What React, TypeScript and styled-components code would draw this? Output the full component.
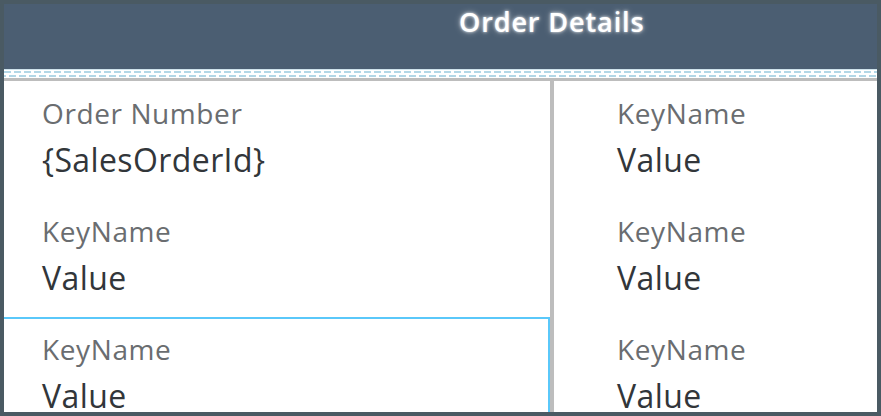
import React from "react";
import styled, { createGlobalStyle } from "styled-components";

const GlobalStyle = createGlobalStyle`
  html, body { margin: 0; padding: 0; background: #4a5a63; }
  body { font-family: "Open Sans", "Noto Sans", sans-serif; }
  * { box-sizing: border-box; }
`;

const Frame = styled.div`
  width: 881px;
  height: 416px;
  padding: 4px;
  background: #4a5a63;
`;

const Card = styled.div`
  height: 100%;
  background: #ffffff;
  display: flex;
  flex-direction: column;
  overflow: hidden;
`;

const Header = styled.header`
  height: 65px;
  flex: none;
  background: #4b5e72;
  padding: 1px 0 0 455px;
`;

const Title = styled.h1`
  margin: 0;
  font-family: "Open Sans", sans-serif;
  font-weight: 600;
  font-size: 27px;
  letter-spacing: 0.9px;
  line-height: 34px;
  color: #ffffff;
  white-space: nowrap;
  text-shadow: 0 0 3px rgba(255, 255, 255, 0.9), 0 0 6px rgba(255, 255, 255, 0.5);
`;

const Separator = styled.div`
  flex: none;
  height: 12px;
  border-bottom: 3px solid #bdbdbd;
  background:
    linear-gradient(#cfe3ec, #cfe3ec) 0 0 / 100% 1px no-repeat,
    linear-gradient(90deg, #b3d7e6 0 7px, transparent 7px 10px) 0 2px / 10px 2px repeat-x,
    linear-gradient(90deg, #b3d7e6 0 7px, transparent 7px 10px) 5px 6px / 10px 2px repeat-x,
    #ffffff;
`;

const Columns = styled.div`
  flex: 1;
  display: grid;
  grid-template-columns: 546px 4px 1fr;
  min-height: 0;
`;

const Divider = styled.div`
  background: #bdbdbd;
`;

const Column = styled.div<{ $indent: number }>`
  display: flex;
  flex-direction: column;
  --indent: ${(p) => p.$indent}px;
`;

const Item = styled.div<{ $focused?: boolean }>`
  flex: none;
  height: 118px;
  padding-left: var(--indent);
  padding-top: ${(p) => (p.$focused ? 14 : 16)}px;
  border-top: ${(p) => (p.$focused ? "2px solid #5ac8fa" : "none")};
  border-right: 2px solid ${(p) => (p.$focused ? "#5ac8fa" : "transparent")};
  display: flex;
  flex-direction: column;
  gap: 12px;
`;

const Label = styled.div`
  font-size: 28px;
  letter-spacing: 0.6px;
  line-height: 32px;
  color: #6a6d70;
  white-space: nowrap;
`;

const Value = styled.div`
  font-size: 32px;
  letter-spacing: 0.4px;
  line-height: 38px;
  color: #32363a;
  white-space: nowrap;
`;

const left = [
  { k: "Order Number", v: "{SalesOrderId}" },
  { k: "KeyName", v: "Value" },
  { k: "KeyName", v: "Value", focused: true },
];
const right = [
  { k: "KeyName", v: "Value" },
  { k: "KeyName", v: "Value" },
  { k: "KeyName", v: "Value" },
];

export default function App() {
  return (
    <>
      <GlobalStyle />
      <Frame>
        <Card>
          <Header>
            <Title>Order Details</Title>
          </Header>
          <Separator />
          <Columns>
            <Column $indent={38}>
              {left.map((it, i) => (
                <Item key={i} $focused={it.focused}>
                  <Label>{it.k}</Label>
                  <Value>{it.v}</Value>
                </Item>
              ))}
            </Column>
            <Divider />
            <Column $indent={63}>
              {right.map((it, i) => (
                <Item key={i}>
                  <Label>{it.k}</Label>
                  <Value>{it.v}</Value>
                </Item>
              ))}
            </Column>
          </Columns>
        </Card>
      </Frame>
    </>
  );
}
